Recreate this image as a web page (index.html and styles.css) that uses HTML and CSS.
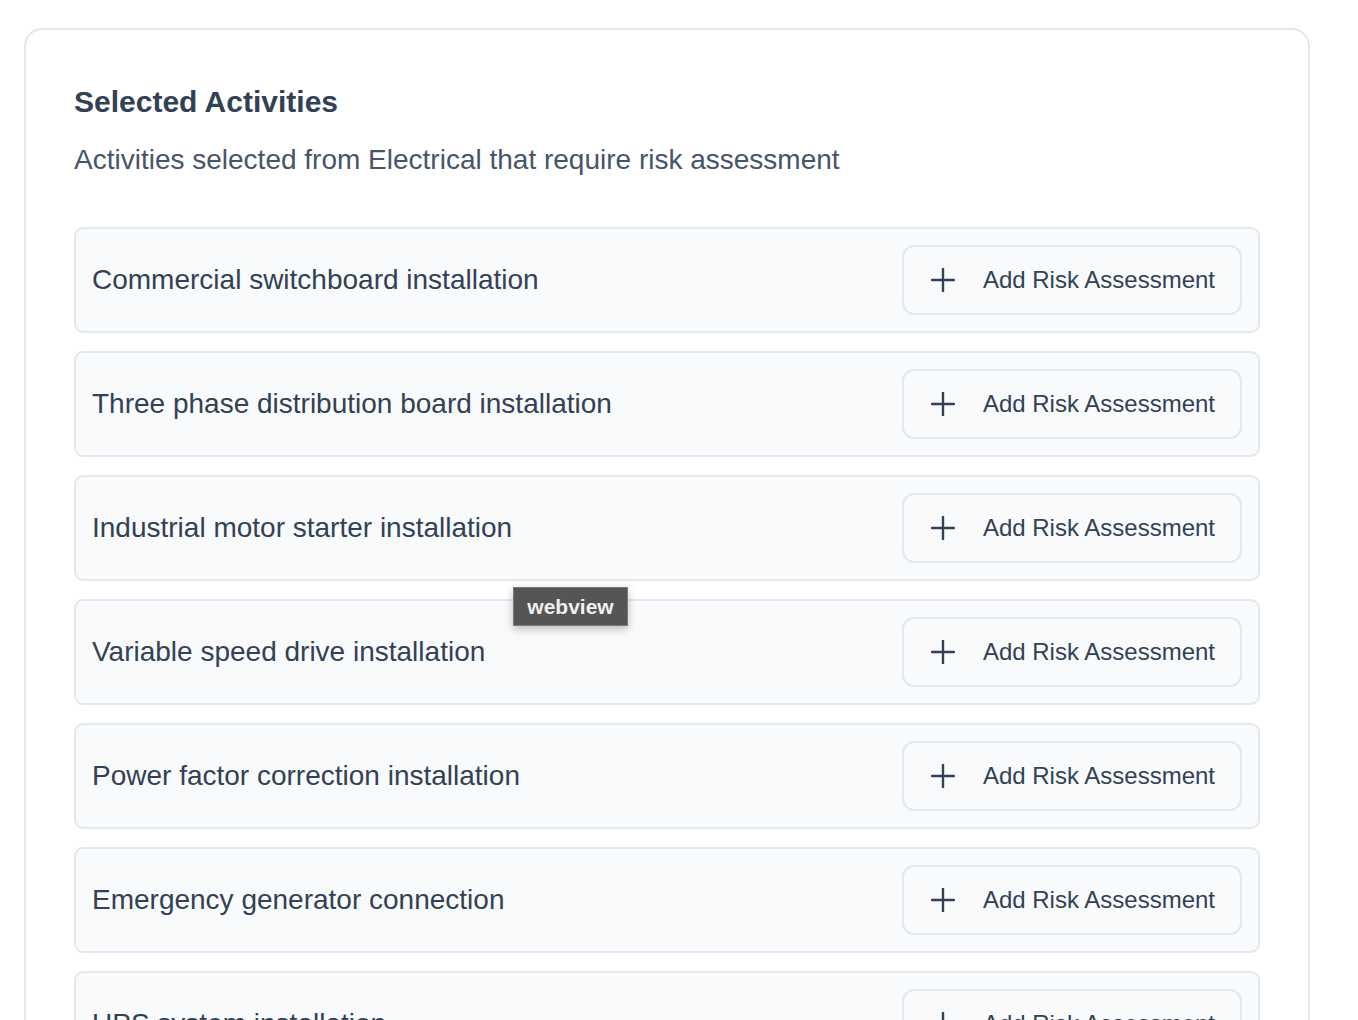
FILE: index.html
```html
<!DOCTYPE html>
<html lang="en">
<head>
<meta charset="utf-8">
<title>Selected Activities</title>
<link rel="stylesheet" href="styles.css">
</head>
<body>
<section class="card">
  <h2 class="title">Selected Activities</h2>
  <p class="subtitle">Activities selected from Electrical that require risk assessment</p>
  <ul class="list">
    <li class="row"><span class="row-name">Commercial switchboard installation</span>
      <button class="btn"><svg class="plus" viewBox="0 0 24 24"><path d="M12 1v22M1 12h22"/></svg><span>Add Risk Assessment</span></button></li>
    <li class="row"><span class="row-name">Three phase distribution board installation</span>
      <button class="btn"><svg class="plus" viewBox="0 0 24 24"><path d="M12 1v22M1 12h22"/></svg><span>Add Risk Assessment</span></button></li>
    <li class="row"><span class="row-name">Industrial motor starter installation</span>
      <button class="btn"><svg class="plus" viewBox="0 0 24 24"><path d="M12 1v22M1 12h22"/></svg><span>Add Risk Assessment</span></button></li>
    <li class="row"><span class="row-name">Variable speed drive installation</span>
      <button class="btn"><svg class="plus" viewBox="0 0 24 24"><path d="M12 1v22M1 12h22"/></svg><span>Add Risk Assessment</span></button></li>
    <li class="row"><span class="row-name">Power factor correction installation</span>
      <button class="btn"><svg class="plus" viewBox="0 0 24 24"><path d="M12 1v22M1 12h22"/></svg><span>Add Risk Assessment</span></button></li>
    <li class="row"><span class="row-name">Emergency generator connection</span>
      <button class="btn"><svg class="plus" viewBox="0 0 24 24"><path d="M12 1v22M1 12h22"/></svg><span>Add Risk Assessment</span></button></li>
    <li class="row"><span class="row-name">UPS system installation</span>
      <button class="btn"><svg class="plus" viewBox="0 0 24 24"><path d="M12 1v22M1 12h22"/></svg><span>Add Risk Assessment</span></button></li>
    <li class="row"><span class="row-name">Solar inverter installation</span>
      <button class="btn"><svg class="plus" viewBox="0 0 24 24"><path d="M12 1v22M1 12h22"/></svg><span>Add Risk Assessment</span></button></li>
  </ul>
</section>
<div class="tooltip">webview</div>
</body>
</html>
```
FILE: styles.css
```css
html, body {
  margin: 0;
  padding: 0;
  background: #ffffff;
}
body {
  font-family: "Liberation Sans", Arial, Helvetica, sans-serif;
  color: #334155;
  padding: 28px 48px 0 24px;
  height: 1020px;
  overflow: hidden;
  box-sizing: border-box;
  position: relative;
}
.card {
  border: 2px solid #e2e8f0;
  border-radius: 18px;
  background: #ffffff;
  padding: 52px 48px 48px 48px;
}
.title {
  margin: 0;
  font-size: 30px;
  line-height: 40px;
  font-weight: 700;
  color: #334155;
}
.subtitle {
  margin: 18px 0 0 0;
  font-size: 28px;
  line-height: 40px;
  color: #475569;
}
.list {
  list-style: none;
  margin: 47px 0 0 0;
  padding: 0;
  display: flex;
  flex-direction: column;
  gap: 18px;
}
.row {
  display: flex;
  align-items: center;
  justify-content: space-between;
  border: 2px solid #e2e8f0;
  border-radius: 9px;
  background: #f8fafc;
  padding: 16px;
}
.row-name {
  font-size: 28px;
  color: #334155;
}
.btn {
  display: flex;
  align-items: center;
  gap: 28px;
  height: 70px;
  box-sizing: border-box;
  padding: 0 25px 0 27px;
  border: 2px solid #e2e8f0;
  border-radius: 12px;
  background: #f8fafc;
  font-family: inherit;
  font-size: 24px;
  color: #334155;
  cursor: pointer;
}
.plus {
  width: 24px;
  height: 24px;
  fill: none;
  stroke: #334155;
  stroke-width: 2.4;
  stroke-linecap: round;
}
.tooltip {
  position: absolute;
  left: 513px;
  top: 587px;
  width: 115px;
  height: 39px;
  box-sizing: border-box;
  background: #555555;
  border: 1px solid #7a7a7a;
  color: #f0f0f0;
  font-size: 21px;
  font-weight: 700;
  display: flex;
  align-items: center;
  justify-content: center;
  box-shadow: 0 3px 8px rgba(0, 0, 0, 0.25);
}
```
